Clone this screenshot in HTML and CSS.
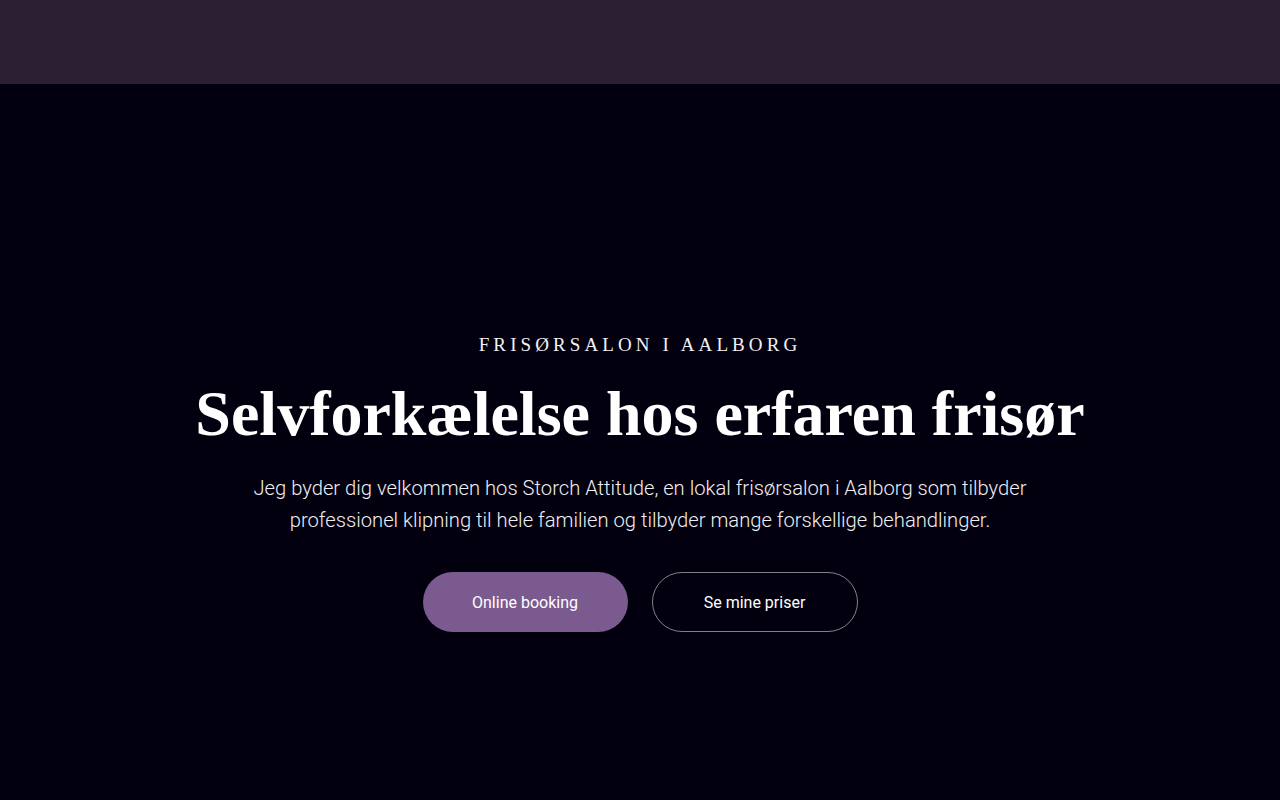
FILE: index.html
```html
<!DOCTYPE html>
<html lang="da">
<head>
  <title>Storch Attitude – Frisørsalon i Aalborg</title>
  <meta charset="UTF-8">
  <link rel="stylesheet" href="styles.css">
</head>
<body>
  <header class="site-header"></header>

  <section class="hero">
    <div class="hero-inner">
      <div class="hero-eyebrow">Frisørsalon i Aalborg</div>
      <h1 class="hero-title">Selvforkælelse hos erfaren frisør</h1>
      <p class="hero-text">Jeg byder dig velkommen hos Storch Attitude, en lokal frisørsalon i Aalborg som tilbyder professionel klipning til hele familien og tilbyder mange forskellige behandlinger.</p>
      <div class="hero-actions">
        <a class="btn btn-primary" href="#booking">Online booking</a>
        <a class="btn btn-outline" href="#priser">Se mine priser</a>
      </div>
    </div>
  </section>
</body>
</html>
```

FILE: styles.css
```css
body {
  margin: 0;
  background: #02000f;
  color: #fff;
  font-family: Roboto, "Liberation Sans", sans-serif;
}

/* Topbar */
.site-header {
  height: 84px;
  background: #2c1f33;
}

/* Hero */
.hero {
  height: 716px;
  background: #02000f;
}

.hero-inner {
  padding-top: 250px;
  text-align: center;
}

.hero-eyebrow {
  font-family: "Liberation Serif", "DejaVu Serif", serif;
  font-size: 19px;
  line-height: 22px;
  letter-spacing: 4.1px;
  text-transform: uppercase;
  color: #f2f0f4;
}

.hero-title {
  margin: 18px 0 0;
  font-family: "Liberation Serif", "DejaVu Serif", serif;
  font-size: 64px;
  font-weight: bold;
  line-height: 80px;
  color: #fff;
}

.hero-text {
  margin: 18px auto 0;
  max-width: 800px;
  font-size: 20.2px;
  font-weight: 300;
  line-height: 32px;
  color: #f0eef2;
}

.hero-actions {
  display: flex;
  justify-content: center;
  gap: 24px;
  margin-top: 36px;
}

.btn {
  box-sizing: border-box;
  width: 205px;
  height: 60px;
  display: flex;
  align-items: center;
  justify-content: center;
  border-radius: 30px;
  font-size: 16px;
  color: #fff;
  text-decoration: none;
}

.btn-primary {
  background: #7b5a8f;
}

.btn-outline {
  width: 206px;
  border: 1px solid rgba(255, 255, 255, 0.5);
}
```
